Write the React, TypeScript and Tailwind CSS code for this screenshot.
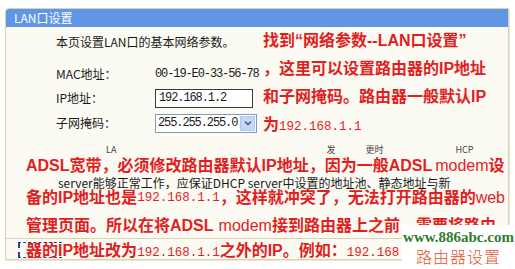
import React from 'react'

const red = 'text-[#e11f1f]'
const boldCn = "font-['Liberation_Sans','Noto_Sans_CJK_SC',sans-serif] font-bold text-[16px]"
const monoRed = "font-['Liberation_Mono','Noto_Sans_CJK_SC',monospace] font-normal text-[12.5px]"
const ui = "font-['Noto_Sans_CJK_SC',sans-serif] text-[12px] text-[#1a1a1a]"
const mono = "font-['Liberation_Mono',monospace] text-[12px] tracking-[-1.1px] text-[#1a1a1a] whitespace-nowrap"

function Ip({ children }: { children: React.ReactNode }) {
  return <span className={`${monoRed} ${red}`}>{children}</span>
}

function FormRow({ label, children, className }: { label: string; children: React.ReactNode; className: string }) {
  return (
    <div className={`flex items-center ${className}`}>
      <div className={`w-[99px] shrink-0 ${ui}`}>{label}</div>
      {children}
    </div>
  )
}

function Watermark() {
  return (
    <div className="absolute right-0 bottom-0 w-[113px] h-[44px] bg-white flex flex-col items-center pt-[3px]">
      <div className="font-['Liberation_Serif',serif] font-bold text-[15px] leading-[18px] text-[#2f7d2a]">
        www.886abc.com
      </div>
      <div className="font-['Noto_Sans_CJK_SC',sans-serif] font-light text-[16px] leading-[20px] tracking-[1px] text-[#e2582c]">
        路由器设置
      </div>
    </div>
  )
}

export default function App() {
  return (
    <div className="relative w-[515px] h-[269px] bg-white overflow-hidden pt-[8px] pl-[5px]">
      <div className="w-[504px] h-[252px] border border-[#dcd2b0] bg-[#fbfaf3] rounded-tl-[4px] shadow-[1px_1px_0_#ece6d2] flex flex-col">
        <div className="h-[24px] bg-[#6096e6] rounded-tl-[3px] flex items-center pl-[8px] font-['Noto_Sans_CJK_SC',sans-serif] text-[12px] text-white">
          LAN口设置
        </div>

        <div className="flex">
          <div className="w-[257px] shrink-0 pl-[50px] pt-[6px]">
            <div className={`h-[18px] flex items-center ${ui}`}>本页设置LAN口的基本网络参数。</div>
            <FormRow label="MAC地址：" className="h-[18px] mt-[14px]">
              <span className={mono}>00-19-E0-33-56-78</span>
            </FormRow>
            <FormRow label="IP地址：" className="h-[22px] mt-[4px]">
              <div className={`w-[98px] h-[19px] border border-[#3a3a3a] bg-white flex items-center pl-[3px] ${mono}`}>
                192.168.1.2
              </div>
            </FormRow>
            <FormRow label="子网掩码：" className="h-[22px] mt-[3px]">
              <div className="w-[102px] h-[19px] border border-[#7f9db9] bg-white flex items-center">
                <span className={`flex-1 pl-[2px] ${mono}`}>255.255.255.0</span>
                <span className="w-[15px] h-[15px] mr-[1px] bg-[#c6d6f7] border border-[#b3c6ee] flex items-center justify-center">
                  <svg width="8" height="6" viewBox="0 0 8 6">
                    <path d="M1 1.5 L4 4.5 L7 1.5" stroke="#4d6185" strokeWidth="1.6" fill="none" />
                  </svg>
                </span>
              </div>
            </FormRow>
          </div>

          <div className={`${boldCn} ${red} leading-[28px] whitespace-nowrap`}>
            <div>找到“网络参数--LAN口设置”</div>
            <div>，这里可以设置路由器的IP地址</div>
            <div>和子网掩码。路由器一般默认IP</div>
            <div>为<Ip>192.168.1.1</Ip></div>
          </div>
        </div>

        <div className="flex h-[11px] mt-[3px] font-['Noto_Sans_CJK_SC',sans-serif] text-[9px] leading-[11px] text-[#444]">
          <span className="ml-[100px]">LA</span>
          <span className="ml-[210px]">发</span>
          <span className="ml-[30px]">更时</span>
          <span className="ml-[72px]">HCP</span>
        </div>

        <div className={`pl-[20px] h-[20px] mt-[1px] flex items-center whitespace-nowrap ${boldCn} ${red}`}>
          ADSL宽带，必须修改路由器默认IP地址，因为一般ADSL<span className="font-normal font-['Liberation_Sans',sans-serif] ml-[3px]">modem</span>设
        </div>
        <div className="pl-[52px] h-[11px] mt-[1px] flex items-center font-['Noto_Sans_CJK_SC',sans-serif] text-[12px] text-[#1a1a1a] whitespace-nowrap">
          server能够正常工作，应保证DHCP server中设置的地址池、静态地址与新
        </div>
        <div className={`pl-[20px] h-[18px] mt-[1px] flex items-center whitespace-nowrap ${boldCn} ${red}`}>
          备的IP地址也是<Ip>192.168.1.1</Ip>，这样就冲突了，无法打开路由器的<span className="font-normal font-['Liberation_Sans',sans-serif]">web</span>
        </div>
        <div className={`pl-[20px] h-[20px] mt-[9px] flex items-center whitespace-nowrap ${boldCn} ${red}`}>
          管理页面。所以在将ADSL<span className="font-normal font-['Liberation_Sans',sans-serif] ml-[5px]">modem</span>接到路由器上之前，需要将路由
        </div>

        <div className="mt-[2px] border-t border-[#dcd2b0] flex-1 relative flex items-center">
          <span className="absolute left-[12px] top-[3px] w-[44px] h-[16px] border-l-2 border-t border-b border-[#2b3f8f] border-dashed" />
          <div className={`relative pl-[20px] pb-[2px] whitespace-nowrap ${boldCn} ${red}`}>
            器的IP地址改为<Ip>192.168.1.1</Ip>之外的IP。例如：<Ip>192.168.1.10</Ip>
          </div>
        </div>
      </div>
      <Watermark />
    </div>
  )
}
